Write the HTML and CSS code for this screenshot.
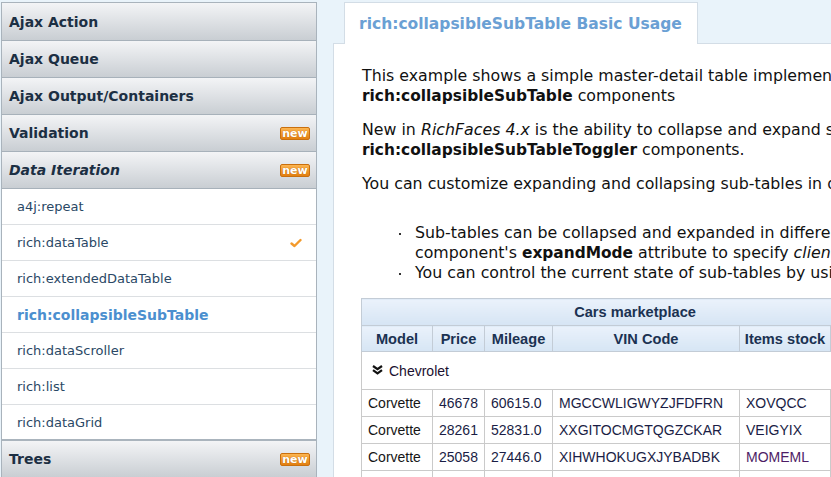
FILE: index.html
```html
<!DOCTYPE html>
<html>
<head>
<meta charset="utf-8">
<link rel="stylesheet" href="styles.css">
</head>
<body>
<div class="page">
  <aside class="sidebar">
    <div class="group first"><span class="gtitle">Ajax Action</span></div>
    <div class="group"><span class="gtitle">Ajax Queue</span></div>
    <div class="group"><span class="gtitle">Ajax Output/Containers</span></div>
    <div class="group"><span class="gtitle">Validation</span><span class="badge">new</span></div>
    <div class="group open"><span class="gtitle">Data Iteration</span><span class="badge">new</span></div>
    <ul class="items">
      <li class="item">a4j:repeat</li>
      <li class="item">rich:dataTable<svg class="check" width="12" height="10" viewBox="0 0 12 10"><path d="M1.5 5.5 L4.5 8 L10.5 2" fill="none" stroke="#f39a2c" stroke-width="2.4" stroke-linecap="round" stroke-linejoin="round"/></svg></li>
      <li class="item">rich:extendedDataTable</li>
      <li class="item active">rich:collapsibleSubTable</li>
      <li class="item">rich:dataScroller</li>
      <li class="item">rich:list</li>
      <li class="item last">rich:dataGrid</li>
    </ul>
    <div class="group"><span class="gtitle">Trees</span><span class="badge">new</span></div>
  </aside>

  <main class="main">
    <div class="tabs">
      <div class="tab">rich:collapsibleSubTable Basic Usage</div>
    </div>
    <div class="panel">
      <p>This example shows a simple master-detail table implementation using <b>rich:dataTable</b> and<br><b>rich:collapsibleSubTable</b> components</p>
      <p>New in <i>RichFaces 4.x</i> is the ability to collapse and expand sub-tables using<br><b>rich:collapsibleSubTableToggler</b> components.</p>
      <p>You can customize expanding and collapsing sub-tables in different ways:</p>
      <ul class="bullets">
        <li>Sub-tables can be collapsed and expanded in different modes. Use the <b>rich:collapsibleSubTable</b><br>component's <b>expandMode</b> attribute to specify <i>client</i>, <i>ajax</i> or <i>server</i> modes.</li>
        <li>You can control the current state of sub-tables by using the <b>expanded</b> attribute.</li>
      </ul>
      <table class="cars">
        <colgroup>
          <col class="c-model"><col class="c-price"><col class="c-mileage"><col class="c-vin"><col class="c-stock"><col class="c-extra">
        </colgroup>
        <thead>
          <tr class="cap"><th colspan="6">Cars marketplace</th></tr>
          <tr class="heads"><th>Model</th><th>Price</th><th>Mileage</th><th>VIN Code</th><th>Items stock</th><th>Days Live</th></tr>
        </thead>
        <tbody>
          <tr class="group-row"><td colspan="6"><span class="toggler"><svg width="11" height="10" viewBox="0 0 11 10"><path d="M1 1 L5.5 4.2 L10 1 M1 5.2 L5.5 8.4 L10 5.2" fill="none" stroke="#111" stroke-width="2.2"/></svg>Chevrolet</span></td></tr>
          <tr><td>Corvette</td><td>46678</td><td>60615.0</td><td>MGCCWLIGWYZJFDFRN</td><td>XOVQCC</td><td>12</td></tr>
          <tr><td>Corvette</td><td>28261</td><td>52831.0</td><td>XXGITOCMGTQGZCKAR</td><td>VEIGYIX</td><td>7</td></tr>
          <tr><td>Corvette</td><td>25058</td><td>27446.0</td><td>XIHWHOKUGXJYBADBK</td><td class="purple">MOMEML</td><td>21</td></tr>
          <tr><td>Corvette</td><td>41233</td><td>18320.0</td><td>QWERTYUIOPASDFGHJ</td><td>LKJHGF</td><td>3</td></tr>
        </tbody>
      </table>
    </div>
  </main>
</div>
</body>
</html>
```
FILE: styles.css
```css
html, body {
  margin: 0;
  padding: 0;
  background: #e9f3fa;
  overflow: hidden;
  width: 831px;
  height: 477px;
}

.page {
  display: flex;
  align-items: flex-start;
  width: 1200px;
}

/* ---------- sidebar ---------- */
.sidebar {
  flex: none;
  width: 316px;
  box-sizing: border-box;
  margin: 2px 16px 0 1px;
  border: 1px solid #a9b3bc;
  border-bottom: none;
  background: #fff;
  font-family: "DejaVu Sans", sans-serif;
}

.group {
  height: 36px;
  border-bottom: 1px solid #a7b1ba;
  background: linear-gradient(#f3f4f6, #c9ced3);
  display: flex;
  align-items: center;
  justify-content: space-between;
  padding: 0 6px 0 7px;
  font-size: 14px;
  font-weight: bold;
  color: #1c2f43;
}

.group.first {
  height: 37px;
}

.group.open .gtitle {
  font-style: italic;
}

.badge {
  width: 30px;
  height: 13px;
  box-sizing: border-box;
  border: 1px solid #c96f0d;
  border-radius: 2px;
  background: linear-gradient(#fcb551, #e27f10);
  color: #fff;
  font-size: 11px;
  line-height: 11px;
  font-weight: bold;
  text-align: center;
  text-shadow: 0 0 1px #b35c00;
}

.items {
  list-style: none;
  margin: 0;
  padding: 0;
}

.item {
  height: 35px;
  border-bottom: 1px solid #dcdfe2;
  display: flex;
  align-items: center;
  justify-content: space-between;
  padding: 0 14px 0 15px;
  font-size: 13px;
  color: #2a4865;
  background: #fff;
}

.item.last {
  border-bottom: 2px solid #aab4bd;
  height: 34px;
}

.item.active {
  color: #4b8fcf;
  font-weight: bold;
  font-size: 14px;
}

.check {
  display: block;
}

/* ---------- main ---------- */
.main {
  flex: none;
  width: 850px;
  font-family: "DejaVu Sans", sans-serif;
}

.tabs {
  display: flex;
  padding-left: 11px;
}

.tab {
  position: relative;
  margin-top: 2px;
  margin-bottom: -1px;
  width: 354px;
  height: 42px;
  box-sizing: border-box;
  border: 1px solid #d3dde6;
  border-bottom: none;
  background: #fff;
  padding-left: 14px;
  display: flex;
  align-items: center;
  font-size: 15.5px;
  font-weight: bold;
  color: #6aa0d4;
  z-index: 1;
}

.panel {
  background: #fff;
  border-top: 1px solid #d3dde6;
  border-left: 1px solid #d3dde6;
  padding: 22px 0 40px 28px;
  height: 500px;
  color: #111;
}

.panel p {
  margin: 0 0 14px;
  font-size: 15.8px;
  line-height: 20px;
  white-space: nowrap;
}

.panel b {
  font-size: 15.4px;
}

.bullets {
  list-style: none;
  margin: 29px 0 0;
  padding: 0;
  font-size: 15.8px;
  line-height: 20px;
  white-space: nowrap;
}

.bullets li {
  position: relative;
  padding-left: 53px;
}

.bullets li::before {
  content: "";
  position: absolute;
  left: 37px;
  top: 10px;
  width: 2px;
  height: 2px;
  background: #333;
}

/* ---------- table ---------- */
.cars {
  margin: 15px 0 0 -1px;
  border-collapse: collapse;
  table-layout: fixed;
  width: 547px;
  font-family: "Liberation Sans", Arial, sans-serif;
  font-size: 14px;
}

.c-model { width: 71px; }
.c-price { width: 52px; }
.c-mileage { width: 68px; }
.c-vin { width: 187px; }
.c-stock { width: 91px; }
.c-extra { width: 78px; }

.cars th {
  border: 1px solid #c3ccd6;
  background: linear-gradient(#eaf2fb, #d6e5f4);
  color: #1b3252;
  font-weight: bold;
  font-size: 14.6px;
  padding: 0;
  text-align: center;
  white-space: nowrap;
  overflow: hidden;
}

.cars .cap th {
  height: 26px;
}

.cars .heads th {
  height: 25px;
}

.cars td {
  border: 1px solid #cacaca;
  height: 26px;
  padding: 0 5px 0 6px;
  color: #1a1d45;
  white-space: nowrap;
}

.cars td:first-child {
  color: #151515;
}

.cars .group-row td {
  height: 37px;
  padding-left: 10px;
  color: #1a1030;
}

.toggler {
  display: flex;
  align-items: center;
  gap: 6px;
}

.toggler svg {
  display: block;
  margin-top: -2px;
}

.cars td.purple {
  color: #4e1d66;
}
```
